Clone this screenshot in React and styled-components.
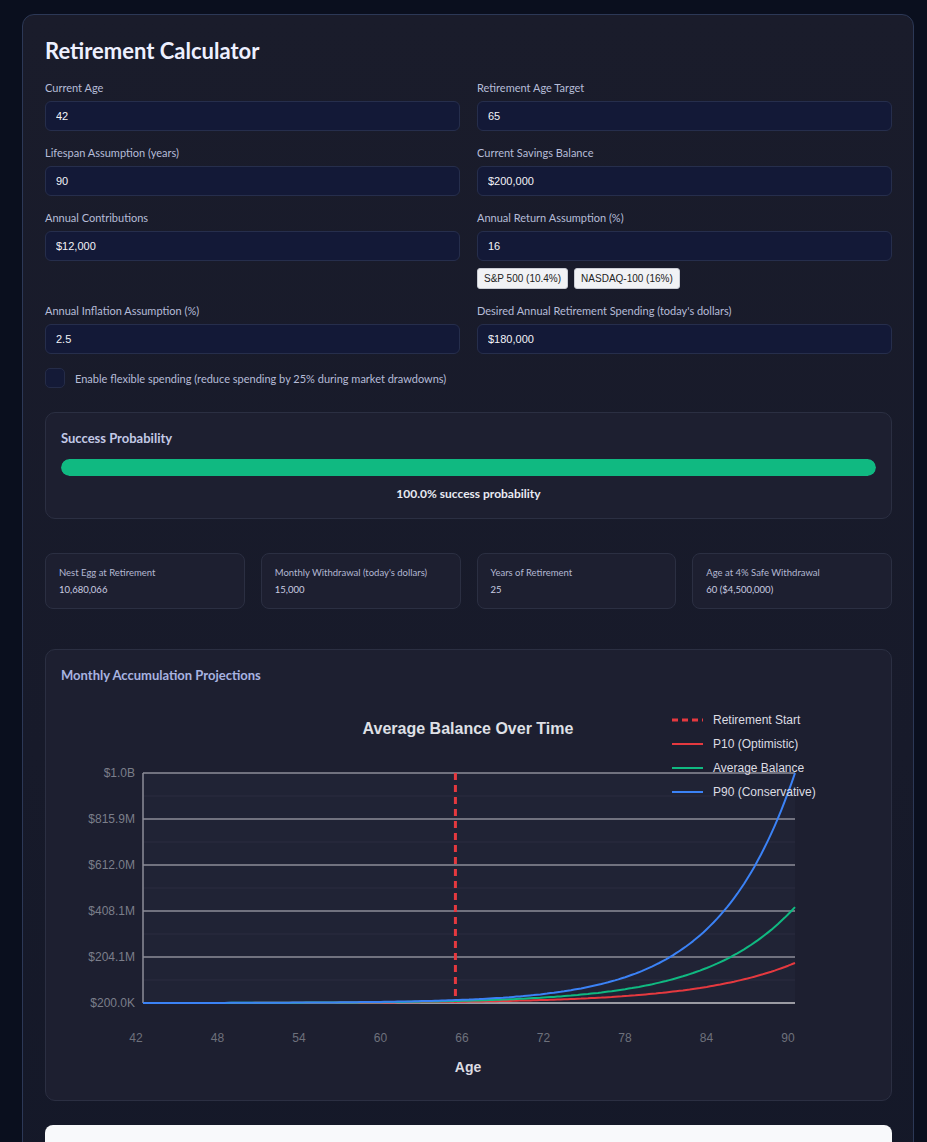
import React, { useMemo } from "react";
import styled, { createGlobalStyle } from "styled-components";

const GlobalStyle = createGlobalStyle`
  html, body {
    margin: 0;
    padding: 0;
    background: #0a0f1e;
  }
  body {
    font-family: Lato, "Noto Sans", sans-serif;
  }
  * { box-sizing: border-box; }
`;

const Page = styled.div`
  padding: 14px 13px 0 22px;
  min-height: 1142px;
`;

const Card = styled.main`
  background: linear-gradient(180deg, #1a1c2b 0%, #171a2a 60%, #141828 100%);
  border: 1px solid #2c3856;
  border-radius: 12px;
  padding: 22px 21px 0 22px;
  min-height: 1200px;
`;

const Title = styled.h1`
  margin: 0 0 16px;
  font-size: 22px;
  line-height: 28px;
  font-weight: 700;
  color: #eef0ff;
`;

const FormGrid = styled.div`
  display: grid;
  grid-template-columns: 1fr 1fr;
  column-gap: 17px;
  row-gap: 15px;
`;

const Field = styled.div`
  display: flex;
  flex-direction: column;
`;

const Label = styled.label`
  font-size: 11px;
  line-height: 14px;
  color: #b6bcd8;
  margin-bottom: 6px;
`;

const Input = styled.input`
  height: 30px;
  width: 100%;
  background: #131937;
  border: 1px solid #262e4c;
  border-radius: 6px;
  padding: 0 10px;
  color: #f2f3f8;
  font-family: "Liberation Sans", Arial, sans-serif;
  font-size: 11px;
  outline: none;
`;

const Presets = styled.div`
  display: flex;
  gap: 6px;
  margin-top: 7px;
`;

const Preset = styled.button`
  height: 21px;
  padding: 0 6px;
  background: #f1f2f5;
  border: 1px solid #c9ccd4;
  border-radius: 3px;
  color: #222;
  font-family: "Liberation Sans", Arial, sans-serif;
  font-size: 10px;
  cursor: pointer;
`;

const CheckRow = styled.label`
  display: flex;
  align-items: center;
  gap: 10px;
  margin-top: 14px;
  font-size: 11px;
  color: #b6bcd8;
`;

const Check = styled.span`
  width: 20px;
  height: 20px;
  border-radius: 5px;
  background: #141a37;
  border: 1px solid #252c48;
`;

const Panel = styled.section`
  background: #1d1f30;
  border: 1px solid #2b2f42;
  border-radius: 10px;
  padding: 16px 15px;
  margin-top: ${(p) => p.$top}px;
`;

const PanelTitle = styled.h2`
  margin: 0;
  font-size: 13px;
  line-height: 18px;
  font-weight: 700;
  color: ${(p) => p.$color || "#c3c9e6"};
`;

const Bar = styled.div`
  height: 17px;
  border-radius: 9px;
  background: #283044;
  margin-top: 12px;
  overflow: hidden;
`;

const BarFill = styled.div`
  height: 100%;
  border-radius: 9px;
  background: #10b981;
`;

const BarText = styled.div`
  margin-top: 10px;
  text-align: center;
  font-size: 12px;
  line-height: 16px;
  font-weight: 700;
  color: #e8eaf2;
`;

const Stats = styled.div`
  display: grid;
  grid-template-columns: repeat(4, 1fr);
  gap: 16px;
  margin-top: 34px;
`;

const Stat = styled.div`
  background: #1d1f30;
  border: 1px solid #2b2f42;
  border-radius: 8px;
  padding: 12px 13px;
  display: flex;
  flex-direction: column;
  gap: 4px;
`;

const StatLabel = styled.div`
  font-size: 9.5px;
  line-height: 13px;
  color: #b3b8d2;
`;

const StatValue = styled.div`
  font-size: 9.5px;
  line-height: 13px;
  color: #c9cde0;
`;

const ChartWrap = styled.div`
  margin-top: 16px;
  height: 384px;
  svg {
    display: block;
    font-family: "Liberation Sans", Arial, sans-serif;
  }
`;

const Sheet = styled.div`
  margin-top: 24px;
  background: #f8f9fb;
  border-radius: 8px 8px 0 0;
  height: 120px;
`;

const PLOT = { left: 82, right: 734, top: 73, bottom: 303 };
const MAX = 1000;

const toX = (age) => PLOT.left + ((age - 42) / 48) * (PLOT.right - PLOT.left);
const toY = (v) => PLOT.bottom - ((v - 0.2) / (MAX - 0.2)) * (PLOT.bottom - PLOT.top);

function curve(end, rate) {
  const pts = [];
  for (let a = 42; a <= 90.001; a += 0.25) {
    const v = 0.2 + end * Math.exp(rate * (a - 90));
    pts.push(`${toX(a).toFixed(1)},${Math.max(PLOT.top, toY(v)).toFixed(1)}`);
  }
  return "M" + pts.join(" L");
}

const yTicks = ["$1.0B", "$815.9M", "$612.0M", "$408.1M", "$204.1M", "$200.0K"];
const xTicks = [42, 48, 54, 60, 66, 72, 78, 84, 90];

const legend = [
  { label: "Retirement Start", color: "#e5393f", dash: "6 4" },
  { label: "P10 (Optimistic)", color: "#e5393f" },
  { label: "Average Balance", color: "#10b981" },
  { label: "P90 (Conservative)", color: "#3b82f6" },
];

function BalanceChart() {
  const lines = useMemo(
    () => [
      { d: curve(174, 0.14), color: "#e5393f" },
      { d: curve(417, 0.155), color: "#10b981" },
      { d: curve(1000, 0.175), color: "#3b82f6" },
    ],
    []
  );
  const step = (PLOT.bottom - PLOT.top) / 5;
  const retireX = toX(65);

  return (
    <svg width="815" height="384" viewBox="0 0 815 384">
      <rect
        x={PLOT.left}
        y={PLOT.top}
        width={PLOT.right - PLOT.left}
        height={PLOT.bottom - PLOT.top}
        fill="#202335"
      />
      {yTicks.map((t, i) => {
        const y = PLOT.top + i * step;
        return (
          <g key={t}>
            {i < 5 && (
              <line x1={PLOT.left} x2={PLOT.right} y1={y + step / 2} y2={y + step / 2} stroke="#2a2d40" strokeWidth="1" />
            )}
            <line
              x1={PLOT.left}
              x2={PLOT.right}
              y1={y}
              y2={y}
              stroke={i === 5 ? "#c4c4c8" : "#8c8e98"}
              strokeWidth="1.5"
            />
            <text x="74" y={y + 4} textAnchor="end" fontSize="12" fill="#7b7e8a">
              {t}
            </text>
          </g>
        );
      })}
      <line x1={PLOT.left} x2={PLOT.left} y1={PLOT.top} y2={PLOT.bottom} stroke="#8c8e98" strokeWidth="1.5" />
      {xTicks.map((t, i) => (
        <text key={t} x={75 + i * 81.5} y="342" textAnchor="middle" fontSize="12" fill="#6e717c">
          {t}
        </text>
      ))}
      <line
        x1={retireX}
        x2={retireX}
        y1={PLOT.top}
        y2={PLOT.bottom}
        stroke="#e5393f"
        strokeWidth="3"
        strokeDasharray="7 5"
      />
      {lines.map((l) => (
        <path key={l.color} d={l.d} fill="none" stroke={l.color} strokeWidth="2" strokeLinejoin="round" />
      ))}
      <text x="407" y="34" textAnchor="middle" fontSize="16" fontWeight="700" fill="#dfe0e6">
        Average Balance Over Time
      </text>
      {legend.map((item, i) => (
        <g key={item.label}>
          <line
            x1="611"
            x2="642"
            y1={20 + i * 24}
            y2={20 + i * 24}
            stroke={item.color}
            strokeWidth={item.dash ? 3 : 2}
            strokeDasharray={item.dash}
          />
          <text x="652" y={24 + i * 24} fontSize="12" fill="#dcdce2">
            {item.label}
          </text>
        </g>
      ))}
      <text x="407" y="372" textAnchor="middle" fontSize="14" fontWeight="700" fill="#dcdce2">
        Age
      </text>
    </svg>
  );
}

const fields = [
  ["Current Age", "42"],
  ["Retirement Age Target", "65"],
  ["Lifespan Assumption (years)", "90"],
  ["Current Savings Balance", "$200,000"],
  ["Annual Contributions", "$12,000"],
  ["Annual Return Assumption (%)", "16", true],
  ["Annual Inflation Assumption (%)", "2.5"],
  ["Desired Annual Retirement Spending (today's dollars)", "$180,000"],
];

const stats = [
  ["Nest Egg at Retirement", "10,680,066"],
  ["Monthly Withdrawal (today's dollars)", "15,000"],
  ["Years of Retirement", "25"],
  ["Age at 4% Safe Withdrawal", "60 ($4,500,000)"],
];

export default function App() {
  return (
    <>
      <GlobalStyle />
      <Page>
        <Card>
          <Title>Retirement Calculator</Title>
          <FormGrid>
            {fields.map(([label, value, presets]) => (
              <Field key={label}>
                <Label>{label}</Label>
                <Input defaultValue={value} />
                {presets && (
                  <Presets>
                    <Preset>S&amp;P 500 (10.4%)</Preset>
                    <Preset>NASDAQ-100 (16%)</Preset>
                  </Presets>
                )}
              </Field>
            ))}
          </FormGrid>
          <CheckRow>
            <Check />
            Enable flexible spending (reduce spending by 25% during market drawdowns)
          </CheckRow>

          <Panel $top={24}>
            <PanelTitle>Success Probability</PanelTitle>
            <Bar>
              <BarFill style={{ width: "100%" }} />
            </Bar>
            <BarText>100.0% success probability</BarText>
          </Panel>

          <Stats>
            {stats.map(([label, value]) => (
              <Stat key={label}>
                <StatLabel>{label}</StatLabel>
                <StatValue>{value}</StatValue>
              </Stat>
            ))}
          </Stats>

          <Panel $top={40}>
            <PanelTitle $color="#a8b3e0">Monthly Accumulation Projections</PanelTitle>
            <ChartWrap>
              <BalanceChart />
            </ChartWrap>
          </Panel>

          <Sheet />
        </Card>
      </Page>
    </>
  );
}
